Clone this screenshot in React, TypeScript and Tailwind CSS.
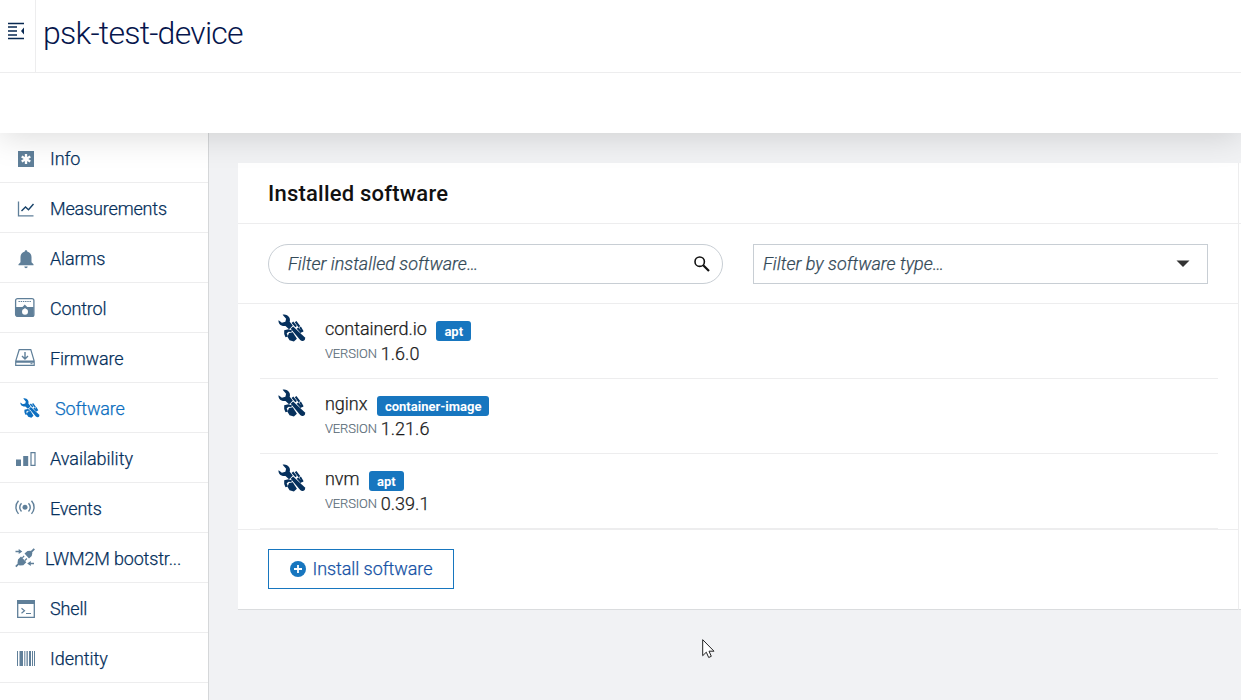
import type { ReactNode } from "react";

function Svg({ children, lowered = false }: { children: ReactNode; lowered?: boolean }) {
  return (
    <svg viewBox={lowered ? "0 -1 22 22" : "0 0 22 22"} className="block h-[22px] w-[22px] shrink-0" fill="none" stroke="none">
      {children}
    </svg>
  );
}

function ToolIcon({ className }: { className: string }) {
  return (
    <svg viewBox="0 0 28 28" className={`block shrink-0 ${className}`} fill="currentColor">
      <path d="M4.600.7C7 .1 10 1 11.300 3.500c.8 1.500.8 3 .4 4.300l3.100 3.600-2.300 2.700-1.500 1.100-3.500-3.300c-2.500.2-4.800-.3-6-2C.6 8.700.3 7.300.6 6.200l3.300 2.500 3.500-.9.7-3z" />
      <path d="M6.200 16.300l4.300-1 3.700 1.300-1 1.500-2.500-.4-2 1.600 1.300 3.300-2.500.7-1.300-3.300z" />
      <path d="M11 19l3.800-.7 4.100 6.500-3 2.700-4.400-1.200-2-3.500z" />
      <path d="M12.700 14.700l2.400-2.200L27 23.600c.5 1.700-.3 3.200-2.100 3.500-1 .1-1.900-.3-2.700-1.100z" />
      <path d="M13.600 9.100l1.700-1.500 3.600 4.400-1.500 1.300zM16.800 8.300l1.600-1.300 3.800 5.100-1.600 1.300zM18.700 14.700l1.600-1.300 3.900 4.200-1.400 1.700zM21.300 13.700l1.600-1.200 2.700 4.700-1.300 1.100z" />
    </svg>
  );
}

const info = (
  <Svg lowered>
    <path d="M3 3h16v16H3z" fill="currentColor" />
    <path d="M11 6v10M6.700 8.500l8.600 5M15.300 8.500l-8.600 5" stroke="white" strokeWidth="2.300" />
  </Svg>
);
const chart = (
  <Svg lowered>
    <path d="M3.500 3.500v14.300H18.500" stroke="currentColor" strokeWidth="1.300" />
    <path d="M6.500 13l4-4 3 2.700 5-5.700" stroke="#164168" strokeWidth="1.400" />
  </Svg>
);
const bell = (
  <Svg lowered>
    <path d="M11 2.200c.9 0 1.400.6 1.400 1.500 2.500.6 4.100 2.600 4.100 5.300v5.300l2 2v1h-15v-1l2-2V9c0-2.700 1.600-4.700 4.100-5.300 0-.9.500-1.500 1.400-1.500zM9.300 18.500h3.400c-.2 1.200-.8 1.700-1.700 1.700s-1.500-.5-1.700-1.700z" fill="currentColor" />
  </Svg>
);
const control = (
  <Svg>
    <rect x="1.600" y="1.600" width="18.300" height="17.800" rx="2" stroke="currentColor" strokeWidth="1.300" />
    <path d="M2 10h17.700v9.500H2z" fill="currentColor" />
    <path d="M4.500 4.500h13" stroke="currentColor" strokeDasharray="1.400 .8" />
    <path d="M8.500 10l2.300-2.600 2.400 2.600z" fill="currentColor" />
    <circle cx="11" cy="14.800" r="3" fill="white" />
    <path d="M11 11.200v2.600" stroke="white" strokeWidth="1.300" />
  </Svg>
);
const firmware = (
  <Svg>
    <path d="M5.200 2.700h11.600L20.200 14v4.300H1.700V14zM1.700 14h18.500M2 15.200h18" stroke="currentColor" strokeWidth="1.200" />
    <path d="M11 5v6.500M8 9l3 3 3-3" stroke="currentColor" strokeWidth="1.400" />
    <path d="M16.500 16.700h2" stroke="currentColor" />
  </Svg>
);
const bars = (
  <Svg lowered>
    <path d="M1 11.500h5V18H1zM8.200 8h5v10h-5z" fill="currentColor" />
    <path d="M16 4.700h4v12.700h-4z" stroke="currentColor" strokeWidth="1.200" />
  </Svg>
);
const events = (
  <Svg>
    <circle cx="11" cy="10.300" r="2.500" fill="currentColor" />
    <path d="M7.500 6.200c-2.300 2.300-2.300 5.900 0 8.200M14.500 6.200c2.300 2.300 2.300 5.900 0 8.200M4.500 3.700c-3.400 3.700-3.400 9.500 0 13.200M17.500 3.700c3.400 3.700 3.400 9.500 0 13.200" stroke="currentColor" strokeWidth="1.400" />
  </Svg>
);
const plug = (
  <Svg>
    <path d="M20.300 1.800l-3.500 3.600M1.800 19.700l3.500-3.500" stroke="currentColor" strokeWidth="1.800" />
    <path d="M10.500 6.500l3-2.500 3-.3 1.900 2-.7 3.300-2.700 2.500zM7 9.500l5.300 5.700-3 3-3.800.2L3.500 16l.5-3.500z" fill="currentColor" />
    <path d="M8.300 10.800l1.800-1.800M10.900 13.500l2-2" stroke="currentColor" strokeWidth="1.200" />
    <path d="M1.500 4.500h3.700M20 16.500h-3.800" stroke="currentColor" strokeWidth="1.400" />
    <path d="M4.700 2l3.600 2.500L4.700 7zM16.800 14l-3.600 2.500 3.600 2.500z" fill="currentColor" />
  </Svg>
);
const shell = (
  <Svg lowered>
    <path d="M2.700 2.700h16.600v16.600H2.700z" stroke="currentColor" strokeWidth="1.300" />
    <path d="M2 2h18v4H2z" fill="currentColor" />
    <path d="M6.500 10.300l3 2.500-3 2.500M11 15.500h5" stroke="currentColor" strokeWidth="1.200" />
  </Svg>
);
const barcode = (
  <Svg>
    <path d="M2 4h1v15H2zM4.500 4H8v15H4.500zM9.300 4h1v15h-1zM11.500 4h1.300v15h-1.300zM14 4h2v15h-2zM17 4h1v15h-1zM19 4h1v15h-1z" fill="currentColor" />
  </Svg>
);

const nav: { label: string; icon: ReactNode; gap: string; active?: boolean }[] = [
  { label: "Info", icon: info, gap: "pl-[15px] gap-[13px]" },
  { label: "Measurements", icon: chart, gap: "pl-[15px] gap-[13px]" },
  { label: "Alarms", icon: bell, gap: "pl-[15px] gap-[13px]" },
  { label: "Control", icon: control, gap: "pl-[14px] gap-[14px]" },
  { label: "Firmware", icon: firmware, gap: "pl-[14px] gap-[14px]" },
  { label: "Software", icon: <ToolIcon className="h-5 w-5" />, gap: "pl-5 gap-[15px]", active: true },
  { label: "Availability", icon: bars, gap: "pl-[15px] gap-[13px] tracking-[-0.02px]" },
  { label: "Events", icon: events, gap: "pl-[14px] gap-[14px]" },
  { label: "LWM2M bootstr...", icon: plug, gap: "pl-[14px] gap-[9px]" },
  { label: "Shell", icon: shell, gap: "pl-[15px] gap-[13px]" },
  { label: "Identity", icon: barcode, gap: "pl-[15px] gap-[13px] tracking-[-0.05px]" },
];

const packages = [
  { name: "containerd.io", type: "apt", version: "1.6.0" },
  { name: "nginx", type: "container-image", version: "1.21.6" },
  { name: "nvm", type: "apt", version: "0.39.1" },
];

export default function App() {
  return (
    <div className="relative flex h-[700px] w-[1241px] flex-col overflow-hidden bg-[#f1f2f4] font-['Roboto',sans-serif] text-[18px] font-light tracking-[-0.16px] text-[#06305c] [-webkit-text-stroke:0.25px]">
      <header className="relative z-10 h-[133px] shrink-0 bg-white shadow-[0_3px_32px_rgba(0,0,0,0.15)]">
        <div className="flex h-[73px] border-b border-[#ededee]">
          <button className="flex w-9 shrink-0 justify-start border-r border-[#ededee] pl-2 pt-[22px]" aria-label="Toggle menu">
            <svg viewBox="0 0 17 18" className="h-[18px] w-[17px]" fill="none">
              <path d="M0 1.500h16M0 5h9M0 9h9M0 13h9M0 16.500h16" stroke="#082851" strokeWidth="1.700" />
              <path d="M16 5.500v7l-3-3.500z" fill="#082851" />
            </svg>
          </button>
          <h1 className="pl-[7px] pt-[12px] text-[32px] font-light leading-[42px] tracking-[-0.75px] text-[#06164d] [-webkit-text-stroke:0]">psk-test-device</h1>
        </div>
      </header>
      <div className="flex min-h-0 flex-1">
        <nav className="w-[209px] shrink-0 border-r border-[#d5d7d9] bg-white">
          {nav.map((item) => (
            <div
              key={item.label}
              className={`flex h-[50px] items-center border-b border-[#ededee] pt-px ${item.gap} ${item.active ? "text-[#0d6fc0]" : "text-[#5f7f99]"}`}
            >
              {item.icon}
              <span className={item.active ? "text-[#0d6fc0]" : "text-[#06305c]"}>{item.label}</span>
            </div>
          ))}
        </nav>
        <main className="flex flex-1 items-start pl-[29px] pt-[30px]">
          <section className="h-[447px] w-[1001px] shrink-0 border-b border-r border-b-[#dadcde] border-r-[#ededee] bg-white">
            <div className="h-[61px] border-b border-[#ededee] pl-[30px] pt-[15px]">
              <h2 className="text-[22px] font-medium leading-8 tracking-[0.22px] text-[#111] [-webkit-text-stroke:0]">Installed software</h2>
            </div>
            <div className="flex h-20 gap-[30px] border-b border-[#ededee] pl-[30px] pt-5 italic tracking-[0.03px] text-[#344a58]">
              <div className="flex h-10 w-[455px] items-center justify-between rounded-full border border-[#c8ced4] pb-px pl-[19px] pr-3">
                <span>Filter installed software…</span>
                <svg viewBox="0 0 16 16" className="h-4 w-4" fill="none" stroke="#111">
                  <circle cx="5.700" cy="5.700" r="4.700" strokeWidth="1.600" />
                  <path d="M9.200 9.200l5.800 5.800" strokeWidth="2.200" />
                </svg>
              </div>
              <div className="flex h-10 w-[455px] items-center justify-between border border-[#c8ced4] pb-px pl-[9px] pr-[17px]">
                <span>Filter by software type…</span>
                <svg viewBox="0 0 14 7" className="h-[7px] w-[14px]">
                  <path d="M.5.500h13L7 7z" fill="#333" />
                </svg>
              </div>
            </div>
            {packages.map((p) => (
              <div key={p.name} className="ml-[22px] mr-5 flex h-[75px] border-b border-[#ededee] pl-[18px] pt-[10px]">
                <ToolIcon className="h-7 w-7 text-[#06305c]" />
                <div className="pl-[19px] pt-[3px] text-[#1c1c1c]">
                  <div className="flex h-[25px] items-start leading-6 tracking-[-0.03px]">
                    <span>{p.name}</span>
                    <span className="ml-[9.500px] mt-[4px] h-5 rounded-[3px] bg-[#1776bf] px-2 text-[13px] font-bold leading-[21px] tracking-normal text-white [-webkit-text-stroke:0]">{p.type}</span>
                  </div>
                  <div className="flex h-[25px] items-start gap-1 leading-6">
                    <span className="text-[13px] text-[#596b77] [-webkit-text-stroke:0.15px]">VERSION</span>
                    <span className="tracking-[0.02px]">{p.version}</span>
                  </div>
                </div>
              </div>
            ))}
            <div className="h-20 border-t border-[#ededee] pl-[30px] pt-[19px]">
              <button className="flex h-10 w-[186px] items-center border border-[#1776bf] pb-px pl-[21px] tracking-[-0.08px] text-[#1753a5]">
                <svg viewBox="0 0 16 16" className="mr-[6.500px] h-4 w-4" fill="none">
                  <circle cx="8" cy="8" r="8" fill="#1776bf" />
                  <path d="M8 4v8M4 8h8" stroke="white" strokeWidth="1.800" />
                </svg>
                <span>Install software</span>
              </button>
            </div>
          </section>
          <div className="h-[447px] w-[2px] shrink-0 border-b border-[#dadcde] bg-white">
            <div className="h-[61px] border-b border-[#ededee]" />
          </div>
        </main>
      </div>
      <svg viewBox="0 0 13 20" className="absolute left-[702px] top-[639px] h-5 w-[13px]">
        <path d="M.7.700v16l3.600-3.500 2.400 5.300 2.600-1.200-2.300-5.100h5z" fill="white" stroke="#222" />
      </svg>
    </div>
  );
}
